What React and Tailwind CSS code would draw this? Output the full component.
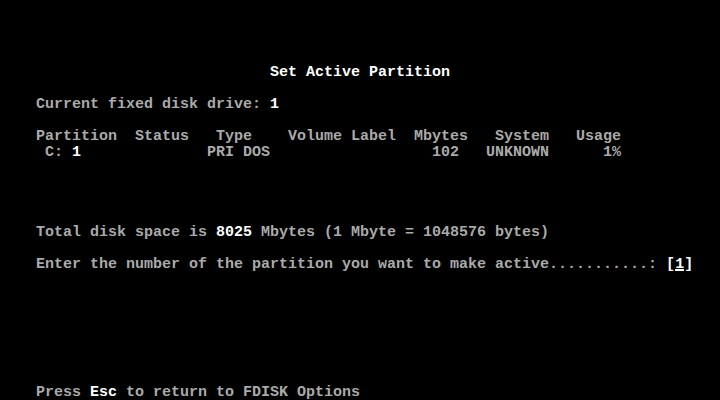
import React from "react";

// 80x25 text screen, 9x16 cells
const B = ({ children }) => <span className="text-white">{children}</span>;

function Row({ children }) {
  return <div className="h-4 whitespace-pre">{children}</div>;
}

export default function App() {
  const blank = (n, k) =>
    Array.from({ length: n }).map((_, i) => <Row key={k + i}>{" "}</Row>);

  return (
    <div
      className="w-[720px] h-[400px] overflow-hidden bg-black pt-px text-[#aaaaaa] text-[15px] leading-4 font-bold"
      style={{ fontFamily: '"Liberation Mono", "DejaVu Sans Mono", monospace' }}
    >
      {blank(4, "a")}
      <Row>
        {"                              "}
        <B>Set Active Partition</B>
      </Row>
      {blank(1, "b")}
      <Row>
        {"    Current fixed disk drive: "}
        <B>1</B>
      </Row>
      {blank(1, "c")}
      <Row>{"    Partition  Status   Type    Volume Label  Mbytes   System   Usage"}</Row>
      <Row>
        {"     C: "}
        <B>1</B>
        {"              PRI DOS                  102   UNKNOWN      1%"}
      </Row>
      {blank(4, "d")}
      <Row>
        {"    Total disk space is "}
        <B>8025</B>
        {" Mbytes (1 Mbyte = 1048576 bytes)"}
      </Row>
      {blank(1, "e")}
      <Row>
        {"    Enter the number of the partition you want to make active...........: "}
        <B>
          [
          <span className="relative inline-block">
            1
            <span className="absolute left-0 right-0 top-[12px] h-[2px] bg-white"></span>
          </span>
          ]
        </B>
      </Row>
      {blank(7, "f")}
      <Row>
        {"    Press "}
        <B>Esc</B>
        {" to return to FDISK Options"}
      </Row>
    </div>
  );
}
